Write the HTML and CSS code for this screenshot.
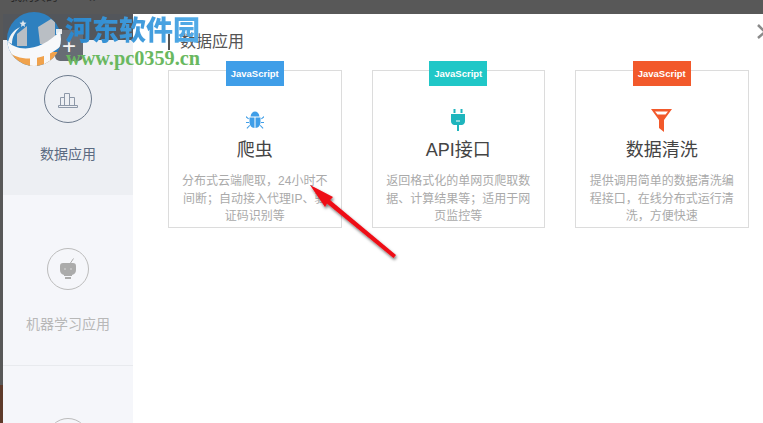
FILE: index.html
```html
<!DOCTYPE html>
<html lang="zh-CN">
<head>
<meta charset="utf-8">
<title>数据应用</title>
<link rel="stylesheet" href="styles.css">
</head>
<body>
<div class="page">
  <header class="topbar">
    <span class="topbar-text">我购买的</span>
    <span class="topbar-more">≫</span>
  </header>
  <div class="stage">
    <div class="strip"></div>
    <div class="modal">
      <aside class="sidebar">
        <div class="sidebar-head"></div>
        <div class="side-item side-item-active">
          <div class="side-circle side-circle-large">
            <svg width="22" height="20" viewBox="0 0 22 20" fill="none" stroke="#8d98a8" stroke-width="1">
              <path d="M1.500 18.500h19v-2h-19zM3.500 16.500v-8h4v8M7.500 16.500v-12h5v12M12.500 16.500v-8h5v8"/>
            </svg>
          </div>
          <div class="side-label">数据应用</div>
        </div>
        <div class="side-item side-item-second">
          <div class="side-circle">
            <svg width="18" height="22" viewBox="0 0 18 22" fill="#ababab">
              <path d="M4 5h10q3 0 3 3v4q0 4-4 5v1H5v-1q-4-1-4-5V8q0-3 3-3z"/>
              <path d="M6 19h6v2H6z"/>
              <path d="M11.500 5l3-4.500" stroke="#ababab" stroke-width="1" fill="none"/>
              <circle cx="6" cy="11" r=".8" fill="#ddd"/><circle cx="12" cy="11" r=".8" fill="#ddd"/>
            </svg>
          </div>
          <div class="side-label side-label-muted">机器学习应用</div>
        </div>
        <div class="side-item side-item-third">
          <div class="side-circle"></div>
        </div>
      </aside>
      <main class="content">
        <h1 class="section-title">数据应用</h1>
        <div class="cards">
          <article class="card">
            <div class="tag tag-blue">JavaScript</div>
            <div class="card-icon">
              <svg width="18" height="18" viewBox="0 0 18 18" fill="#3f9ee8">
                <path d="M4.500 5.500C5 2 7 .5 9 .5s4 1.500 4.500 5z"/>
                <path d="M3.500 6.500h5v10.500C5.500 17 3.500 14 3.500 11zM9.500 6.500h5V11c0 3-2 6-5 6z"/>
                <path d="M0 5l3 2.500-.7.800L0 6.500zM18 5l-3 2.500.7.800L18 6.500zM0 11h3v1H0zM15 11h3v1h-3zM.5 17l3-3 .6.800-2.800 2.900zM17.500 17l-3-3-.6.800 2.800 2.900z"/>
              </svg>
            </div>
            <h2 class="card-title">爬虫</h2>
            <p class="card-desc">分布式云端爬取，24小时不间断；自动接入代理IP、验证码识别等</p>
          </article>
          <article class="card">
            <div class="tag tag-teal">JavaScript</div>
            <div class="card-icon">
              <svg width="14" height="22" viewBox="0 0 14 22" fill="#1fb5bd">
                <path d="M2.500 0h2v4h-2zM9.500 0h2v4h-2z"/>
                <path d="M0 5h14v7q0 3-3 4H8v6H6v-6H3q-3-1-3-4z"/>
                <path d="M5 11.500h4v1H5z" fill="#fff"/>
              </svg>
            </div>
            <h2 class="card-title">API接口</h2>
            <p class="card-desc">返回格式化的单网页爬取数据、计算结果等；适用于网页监控等</p>
          </article>
          <article class="card">
            <div class="tag tag-orange">JavaScript</div>
            <div class="card-icon">
              <svg width="21" height="23" viewBox="0 0 21 23" fill="#f2592b">
                <path d="M0 0h21L13 11v12l-5-4v-8z"/>
                <path d="M4 2.500h13l-2.500 3h-8z" fill="#fff"/>
              </svg>
            </div>
            <h2 class="card-title">数据清洗</h2>
            <p class="card-desc">提供调用简单的数据清洗编程接口，在线分布式运行清洗，方便快速</p>
          </article>
        </div>
      </main>
    </div>
  </div>

  <button class="add-btn" type="button">+</button>

  <svg class="close" width="8" height="16" viewBox="0 0 8 16" fill="none" stroke="#8a8a8a" stroke-width="2.500">
    <path d="M1 1l7 7M8 8l-7 6"/>
  </svg>

  <svg class="logo" width="66" height="70" viewBox="0 0 66 70">
    <defs><clipPath id="disc"><circle cx="34" cy="39" r="27"/></clipPath></defs>
    <g clip-path="url(#disc)">
      <rect x="0" y="10" width="66" height="60" fill="#2e80bf"/>
      <path d="M17 34l10-8v20H17zM38 27l13-8 4 3v22H40z" fill="#b9bec4"/>
      <path d="M0 52h66v18H0z" fill="#f0a24c"/>
      <path d="M6 39C14 52 40 54 62 29v16C44 62 18 62 6 50z" fill="#f7f8fa"/>
      <path d="M30 56h7v12h-7zM44 52h6v14h-6z" fill="#f7f8fa"/>
      <path d="M8 42C10 34 14 30 20 27C15 32 12 37 12 44z" fill="#f2f4f6"/>
    </g>
    <path d="M23 20l1 2.500 2.500.300-2 1.700.600 2.500-2.100-1.400-2.100 1.400.600-2.500-2-1.700 2.500-.300z" fill="#dfe6ec"/>
    <path d="M56 29h6v5h-6z" fill="#f7f8fa" opacity=".9"/>
  </svg>
  <div class="brand">河东软件园</div>
  <div class="brand-url">www.pc0359.cn</div>

  <svg class="arrow" width="100" height="85" viewBox="0 0 100 85">
    <defs>
      <filter id="shadow" x="-20%" y="-20%" width="140%" height="140%">
        <feDropShadow dx="1" dy="2" stdDeviation="1.500" flood-color="#000" flood-opacity=".55"/>
      </filter>
    </defs>
    <g filter="url(#shadow)" fill="#ee0a14">
      <path d="M5 5L28 17L25 20L91 75L88.500 78L22 23.500L20 27z"/>
    </g>
  </svg>
</div>
</body>
</html>
```

FILE: styles.css
```css
* {
  box-sizing: border-box;
}

html,
body {
  margin: 0;
  padding: 0;
  height: 100%;
  overflow: hidden;
  background: #fff;
}

body {
  font-family: "Liberation Sans", "Noto Sans CJK SC", sans-serif;
}

.page {
  position: relative;
  width: 763px;
  height: 423px;
  overflow: hidden;
  display: flex;
  flex-direction: column;
}

.topbar {
  flex: 0 0 14px;
  height: 14px;
  background: #585858;
  color: #262626;
  font-size: 12px;
  line-height: 14px;
  display: flex;
  gap: 31px;
  padding-left: 10px;
  overflow: hidden;
}

.topbar-text,
.topbar-more {
  margin-top: -10px;
}

.stage {
  flex: 1;
  min-height: 0;
  display: flex;
}

.strip {
  flex: 0 0 3px;
  background: linear-gradient(#585858 0, #585858 371px, #5e3a2a 371px);
}

.modal {
  flex: 1;
  min-width: 0;
  display: flex;
  background: #fff;
}

.sidebar {
  flex: 0 0 130px;
  background: #f5f6fa;
  display: flex;
  flex-direction: column;
}

.sidebar-head {
  flex: 0 0 26px;
  background: #53565b;
}

.side-item {
  display: flex;
  flex-direction: column;
  align-items: center;
  flex-shrink: 0;
}

.side-item-active {
  height: 155px;
  padding-top: 35px;
  background: #edeff3;
}

.side-item-second {
  height: 171px;
  padding-top: 53px;
  border-bottom: 1px solid #e8eaee;
}

.side-item-third {
  padding-top: 52px;
}

.side-circle {
  width: 42px;
  height: 42px;
  border-radius: 50%;
  border: 1px solid #bcbcbc;
  display: flex;
  align-items: center;
  justify-content: center;
  flex-shrink: 0;
}

.side-circle-large {
  width: 48px;
  height: 48px;
  border: 1.500px solid #6d7b8d;
}

.side-label {
  margin-top: 21px;
  font-size: 14px;
  line-height: 20px;
  color: #5c6b82;
}

.side-item-second .side-label {
  margin-top: 24px;
}

.side-label-muted {
  color: #b8b8b8;
}

.content {
  flex: 1;
  min-width: 0;
  padding: 20px 0 0 35px;
}

.section-title {
  margin: 0 0 20px;
  height: 16px;
  padding-left: 10px;
  border-left: 2px solid #555;
  font-size: 16px;
  line-height: 16px;
  font-weight: 400;
  color: #555;
}

.cards {
  display: flex;
  gap: 30px;
}

.card {
  width: 173.500px;
  height: 158px;
  border: 1px solid #dcdcdc;
  padding: 0 12px;
  display: flex;
  flex-direction: column;
  align-items: center;
}

.tag {
  margin-top: -10px;
  width: 58px;
  height: 25px;
  flex-shrink: 0;
  display: flex;
  align-items: center;
  justify-content: center;
  color: #fff;
  font-size: 9.500px;
  font-weight: 700;
}

.tag-blue {
  background: #3f9ee8;
}

.tag-teal {
  background: #20c7c7;
}

.tag-orange {
  background: #f2592b;
}

.card-icon {
  margin-top: 22px;
  height: 24px;
  flex-shrink: 0;
  display: flex;
  align-items: center;
  justify-content: center;
}

.card-title {
  margin: 7px 0 0;
  font-size: 18px;
  line-height: 22px;
  font-weight: 400;
  color: #444;
  flex-shrink: 0;
}

.card-desc {
  margin: 12px 0 0;
  width: 148px;
  flex-shrink: 0;
  font-size: 12px;
  line-height: 17.500px;
  color: #aaa;
  text-align: center;
}

.add-btn {
  position: absolute;
  left: 55px;
  top: 30px;
  width: 28px;
  height: 31px;
  padding: 0;
  border: 0;
  border-radius: 5px;
  background: #676c74;
  color: #f4f4f4;
  font-family: "Liberation Sans", sans-serif;
  font-size: 24px;
  line-height: 31px;
  text-align: center;
}

.close {
  position: absolute;
  left: 757px;
  top: 24px;
}

.logo {
  position: absolute;
  left: 0;
  top: 0;
}

.brand {
  position: absolute;
  left: 65px;
  top: 13px;
  font-family: "Noto Sans CJK SC", sans-serif;
  font-size: 27px;
  line-height: 32px;
  font-weight: 900;
  white-space: nowrap;
  background: linear-gradient(90deg, #2a86cc, #53ace8);
  -webkit-background-clip: text;
  background-clip: text;
  color: transparent;
}

.brand-url {
  position: absolute;
  left: 66px;
  top: 48px;
  font-family: "Liberation Serif", serif;
  font-size: 20.300px;
  line-height: 20px;
  font-weight: 700;
  color: #69b860;
  white-space: nowrap;
}

.arrow {
  position: absolute;
  left: 305px;
  top: 180px;
}
```
